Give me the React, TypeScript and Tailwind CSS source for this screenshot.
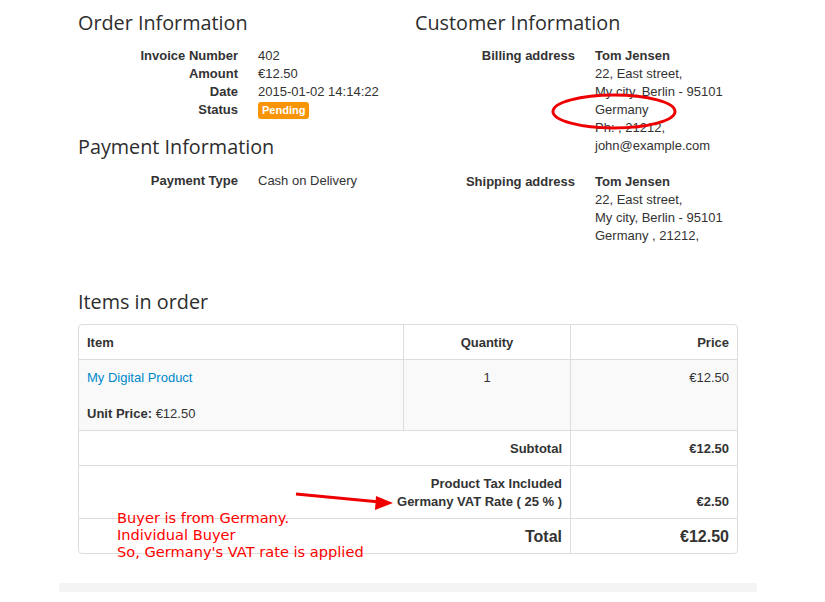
import React from 'react'

type Row = { label: string; lines: React.ReactNode[] }

function InfoList({ rows, gap }: { rows: Row[]; gap: string }) {
    return (
        <dl className={`mt-[12px] flex flex-col ${gap}`}>
            {rows.map((row) => (
                <div key={row.label} className="flex">
                    <dt className="w-[160px] shrink-0 text-right font-bold">{row.label}</dt>
                    <dd className="ml-[20px] flex flex-col">
                        {row.lines.map((line, i) => (
                            <div key={i} className="h-[18px]">{line}</div>
                        ))}
                    </dd>
                </div>
            ))}
        </dl>
    )
}

function Heading({ children, className = '' }: { children: React.ReactNode; className?: string }) {
    return (
        <h2 className={`font-['Open_Sans',sans-serif] text-[19.8px] leading-[24px] font-normal text-[#2d2d2d] ${className}`}>
            {children}
        </h2>
    )
}

export default function App() {
    const cell = 'px-[8px] pt-[9px] pb-[7px]'

    return (
        <div className="relative min-h-[602px] bg-white font-['Liberation_Sans',Arial,sans-serif] text-[13px] leading-[18px] text-[#333]">
            <div className="ml-[78px] w-[660px] pt-[11px]">
                <div className="grid grid-cols-[337px_1fr]">
                    {/* left column */}
                    <div>
                        <Heading>Order Information</Heading>
                        <dl className="mt-[12px]">
                            <div className="flex">
                                <dt className="w-[160px] shrink-0 text-right font-bold">Invoice Number</dt>
                                <dd className="ml-[20px]">402</dd>
                            </div>
                            <div className="flex">
                                <dt className="w-[160px] shrink-0 text-right font-bold">Amount</dt>
                                <dd className="ml-[20px]">€12.50</dd>
                            </div>
                            <div className="flex">
                                <dt className="w-[160px] shrink-0 text-right font-bold">Date</dt>
                                <dd className="ml-[20px]">2015-01-02 14:14:22</dd>
                            </div>
                            <div className="flex h-[18px]">
                                <dt className="w-[160px] shrink-0 text-right font-bold">Status</dt>
                                <dd className="ml-[20px]">
                                    <span className="inline-block h-[17px] rounded-[3px] bg-[#f89406] px-[4px] text-[11px] leading-[17px] font-bold text-white">
                                        Pending
                                    </span>
                                </dd>
                            </div>
                        </dl>

                        <Heading className="mt-[16px]">Payment Information</Heading>
                        <dl className="mt-[13px]">
                            <div className="flex">
                                <dt className="w-[160px] shrink-0 text-right font-bold">Payment Type</dt>
                                <dd className="ml-[20px]">Cash on Delivery</dd>
                            </div>
                        </dl>
                    </div>

                    {/* right column */}
                    <div>
                        <Heading>Customer Information</Heading>
                        <InfoList
                            gap="gap-[18px]"
                            rows={[
                                {
                                    label: 'Billing address',
                                    lines: [
                                        <b>Tom Jensen</b>,
                                        '22, East street,',
                                        'My city, Berlin - 95101',
                                        'Germany',
                                        'Ph: , 21212,',
                                        'john@example.com',
                                    ],
                                },
                                {
                                    label: 'Shipping address',
                                    lines: [
                                        <b>Tom Jensen</b>,
                                        '22, East street,',
                                        'My city, Berlin - 95101',
                                        'Germany , 21212,',
                                    ],
                                },
                            ]}
                        />
                    </div>
                </div>

                <Heading className="mt-[45px]">Items in order</Heading>

                <div className="mt-[10px] overflow-hidden rounded-[4px] border border-[#ddd]">
                    <div className="grid grid-cols-[324px_167px_167px]">
                        {/* header */}
                        <div className={`${cell} font-bold`}>Item</div>
                        <div className={`${cell} border-l border-[#ddd] text-center font-bold`}>Quantity</div>
                        <div className={`${cell} border-l border-[#ddd] text-right font-bold`}>Price</div>

                        {/* item */}
                        <div className={`${cell} border-t border-[#ddd] bg-[#f9f9f9]`}>
                            <div className="text-[#0088cc]">My Digital Product</div>
                            <div>&nbsp;</div>
                            <div>
                                <b>Unit Price:</b> €12.50
                            </div>
                        </div>
                        <div className={`${cell} border-t border-l border-[#ddd] bg-[#f9f9f9] text-center`}>1</div>
                        <div className={`${cell} border-t border-l border-[#ddd] bg-[#f9f9f9] text-right`}>€12.50</div>

                        {/* subtotal */}
                        <div className={`${cell} col-span-2 border-t border-[#ddd] text-right font-bold`}>Subtotal</div>
                        <div className={`${cell} border-t border-l border-[#ddd] text-right font-bold`}>€12.50</div>

                        {/* tax */}
                        <div className={`${cell} col-span-2 border-t border-[#ddd] text-right font-bold`}>
                            <div>Product Tax Included</div>
                            <div>Germany VAT Rate ( 25 % )</div>
                        </div>
                        <div className={`${cell} border-t border-l border-[#ddd] text-right font-bold`}>
                            <div>&nbsp;</div>
                            <div>€2.50</div>
                        </div>

                        {/* total */}
                        <div className={`${cell} col-span-2 border-t border-[#ddd] text-right text-[16px] font-bold`}>Total</div>
                        <div className={`${cell} border-t border-l border-[#ddd] text-right text-[16px] font-bold`}>€12.50</div>
                    </div>
                </div>
            </div>

            <div className="mt-[29px] ml-[59px] h-[9px] w-[698px] bg-[#f4f4f4]" />

            {/* annotations drawn over the screenshot */}
            <svg className="pointer-events-none absolute left-[550px] top-[92px]" width="128" height="39" viewBox="0 0 128 39">
                <ellipse cx="64" cy="19.5" rx="61" ry="16.5" fill="none" stroke="#ee0000" strokeWidth="3" />
            </svg>

            <svg className="pointer-events-none absolute left-[290px] top-[488px]" width="110" height="26" viewBox="0 0 110 26">
                <line x1="6" y1="6" x2="90" y2="14" stroke="#ee0000" strokeWidth="3" />
                <polygon points="103,15 86,8 85,22" fill="#ee0000" />
            </svg>

            <div className="absolute left-[117px] top-[510px] font-['DejaVu_Sans',sans-serif] text-[14.6px] leading-[16.8px] text-[#f00]">
                <div>Buyer is from Germany.</div>
                <div>Individual Buyer</div>
                <div>So, Germany's VAT rate is applied</div>
            </div>
        </div>
    )
}
